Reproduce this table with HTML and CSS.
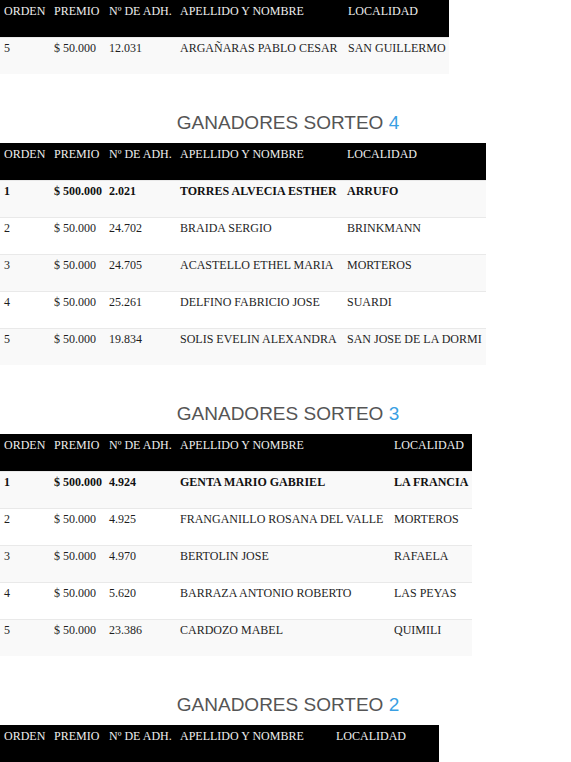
FILE: index.html
```html
<!DOCTYPE html>
<html lang="es">
<head>
<meta charset="utf-8">
<title>Ganadores</title>
<link rel="stylesheet" href="styles.css">
</head>
<body>
<section class="sorteo">
  <table class="ganadores t5">
    <colgroup><col class="c-orden"><col class="c-premio"><col class="c-adh"><col class="c-nombre"><col class="c-loc"></colgroup>
    <thead><tr><th>ORDEN</th><th>PREMIO</th><th>Nº DE ADH.</th><th>APELLIDO Y NOMBRE</th><th>LOCALIDAD</th></tr></thead>
    <tbody>
      <tr><td>5</td><td>$ 50.000</td><td>12.031</td><td>ARGAÑARAS PABLO CESAR</td><td>SAN GUILLERMO</td></tr>
    </tbody>
  </table>
</section>

<section class="sorteo">
  <h2 class="titulo">GANADORES SORTEO <span class="num">4</span></h2>
  <table class="ganadores t4">
    <colgroup><col class="c-orden"><col class="c-premio"><col class="c-adh"><col class="c-nombre"><col class="c-loc"></colgroup>
    <thead><tr><th>ORDEN</th><th>PREMIO</th><th>Nº DE ADH.</th><th>APELLIDO Y NOMBRE</th><th>LOCALIDAD</th></tr></thead>
    <tbody>
      <tr class="primero"><td>1</td><td>$ 500.000</td><td>2.021</td><td>TORRES ALVECIA ESTHER</td><td>ARRUFO</td></tr>
      <tr><td>2</td><td>$ 50.000</td><td>24.702</td><td>BRAIDA SERGIO</td><td>BRINKMANN</td></tr>
      <tr><td>3</td><td>$ 50.000</td><td>24.705</td><td>ACASTELLO ETHEL MARIA</td><td>MORTEROS</td></tr>
      <tr><td>4</td><td>$ 50.000</td><td>25.261</td><td>DELFINO FABRICIO JOSE</td><td>SUARDI</td></tr>
      <tr><td>5</td><td>$ 50.000</td><td>19.834</td><td>SOLIS EVELIN ALEXANDRA</td><td>SAN JOSE DE LA DORMI</td></tr>
    </tbody>
  </table>
</section>

<section class="sorteo">
  <h2 class="titulo">GANADORES SORTEO <span class="num">3</span></h2>
  <table class="ganadores t3">
    <colgroup><col class="c-orden"><col class="c-premio"><col class="c-adh"><col class="c-nombre"><col class="c-loc"></colgroup>
    <thead><tr><th>ORDEN</th><th>PREMIO</th><th>Nº DE ADH.</th><th>APELLIDO Y NOMBRE</th><th>LOCALIDAD</th></tr></thead>
    <tbody>
      <tr class="primero"><td>1</td><td>$ 500.000</td><td>4.924</td><td>GENTA MARIO GABRIEL</td><td>LA FRANCIA</td></tr>
      <tr><td>2</td><td>$ 50.000</td><td>4.925</td><td>FRANGANILLO ROSANA DEL VALLE</td><td>MORTEROS</td></tr>
      <tr><td>3</td><td>$ 50.000</td><td>4.970</td><td>BERTOLIN JOSE</td><td>RAFAELA</td></tr>
      <tr><td>4</td><td>$ 50.000</td><td>5.620</td><td>BARRAZA ANTONIO ROBERTO</td><td>LAS PEYAS</td></tr>
      <tr><td>5</td><td>$ 50.000</td><td>23.386</td><td>CARDOZO MABEL</td><td>QUIMILI</td></tr>
    </tbody>
  </table>
</section>

<section class="sorteo">
  <h2 class="titulo">GANADORES SORTEO <span class="num">2</span></h2>
  <table class="ganadores t2">
    <colgroup><col class="c-orden"><col class="c-premio"><col class="c-adh"><col class="c-nombre"><col class="c-loc"></colgroup>
    <thead><tr><th>ORDEN</th><th>PREMIO</th><th>Nº DE ADH.</th><th>APELLIDO Y NOMBRE</th><th>LOCALIDAD</th></tr></thead>
  </table>
</section>
</body>
</html>
```
FILE: styles.css
```css
html, body {
  margin: 0;
  padding: 0;
  background: #fff;
}

body {
  font-family: "Liberation Serif", "Times New Roman", serif;
  font-size: 12px;
  color: #1e1e1e;
}

.titulo {
  margin: 38px 0 9px;
  padding-left: 5px;
  font-family: "Liberation Sans", Arial, sans-serif;
  font-weight: normal;
  font-size: 19px;
  line-height: 22px;
  text-align: center;
  color: #555;
}

.titulo .num {
  color: #3a9fe3;
}

.ganadores {
  border-collapse: collapse;
  table-layout: fixed;
}

.ganadores th,
.ganadores td {
  padding: 4px 4px 0;
  text-align: left;
  vertical-align: top;
  white-space: nowrap;
  overflow: hidden;
  line-height: 14px;
}

.ganadores td {
  padding-top: 3px;
}

.ganadores thead tr {
  height: 37px;
  background: #000;
}

.ganadores th {
  font-weight: normal;
  color: #eeeeee;
}

.ganadores tbody tr {
  height: 37px;
  border-top: 1px solid #e9e9e9;
}

.ganadores tbody tr:nth-child(odd) {
  background: #f9f9f9;
}

.ganadores tbody tr:nth-child(even) {
  background: #fff;
}

.ganadores .primero td {
  font-weight: bold;
  color: #111;
}

.c-orden { width: 50px; }
.c-premio { width: 55px; }
.c-adh { width: 71px; }

.t5 { width: 449px; }
.t5 .c-nombre { width: 168px; }

.t4 { width: 486px; }
.t4 .c-nombre { width: 167px; }

.t3 { width: 472px; }
.t3 .c-nombre { width: 214px; }

.t2 { width: 439px; }
.t2 .c-nombre { width: 156px; }
```
